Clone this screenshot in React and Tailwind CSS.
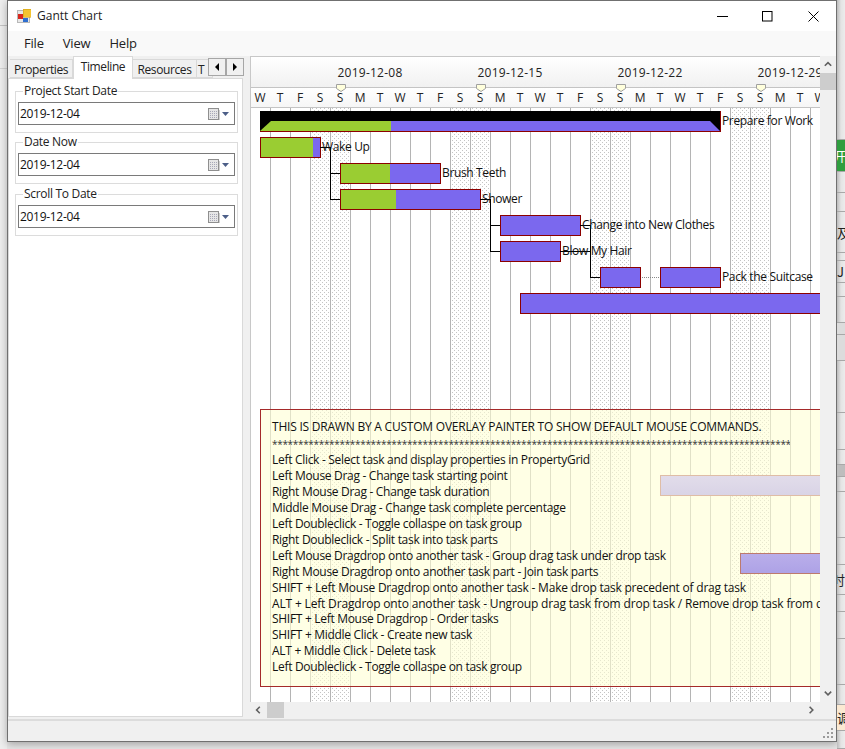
import React from "react";

const DAYS = "WTFSSMT".repeat(5).slice(0, 29).split("");

const LABELS = [
  { text: "Prepare for Work", cls: "left-[471px] top-[5px]" },
  { text: "Wake Up", cls: "left-[71px] top-[31px]" },
  { text: "Brush Teeth", cls: "left-[191px] top-[57px]" },
  { text: "Shower", cls: "left-[231px] top-[83px]" },
  { text: "Change into New Clothes", cls: "left-[331px] top-[109px]" },
  { text: "Blow My Hair", cls: "left-[311px] top-[135px]" },
  { text: "Pack the Suitcase", cls: "left-[471px] top-[161px]" },
];

const COMMANDS = [
  { text: "Left Click - Select task and display properties in PropertyGrid" },
  { text: "Left Mouse Drag - Change task starting point" },
  { text: "Right Mouse Drag - Change task duration" },
  { text: "Middle Mouse Drag - Change task complete percentage" },
  { text: "Left Doubleclick - Toggle collaspe on task group" },
  { text: "Right Doubleclick - Split task into task parts" },
  { text: "Left Mouse Dragdrop onto another task - Group drag task under drop task" },
  { text: "Right Mouse Dragdrop onto another task part - Join task parts" },
  { text: "SHIFT + Left Mouse Dragdrop onto another task - Make drop task precedent of drag task", cls: "tracking-[-0.22px]" },
  { text: "ALT + Left Dragdrop onto another task - Ungroup drag task from drop task / Remove drop task from drag task", cls: "tracking-[-0.17px] h-[15px]" },
  { text: "SHIFT + Left Mouse Dragdrop - Order tasks" },
  { text: "SHIFT + Middle Click - Create new task" },
  { text: "ALT + Middle Click - Delete task" },
  { text: "Left Doubleclick - Toggle collaspe on task group" },
];

// x, y, width, green width
const BARS = [
  [260, 137, 60, 53],
  [340, 163, 100, 50],
  [340, 189, 140, 56],
  [500, 215, 80, 0],
  [500, 241, 60, 0],
  [600, 267, 40, 0],
  [660, 267, 60, 0],
  [520, 293, 320, 0],
];

const LINES = [
  "M320 147.5H330.5V199.5H340M330.5 173.5H340",
  "M480 199.5H490.5V251.5H500M490.5 225.5H500",
  "M580 225.5H590.5V277.5H600M560 251.5H590.5",
];

function GanttDrawing() {
  const grid = [];
  for (let x = 270; x < 830; x += 20) grid.push(x);
  return (
    <svg className="absolute inset-0" width="569" height="594" viewBox="251 108 569 594" shapeRendering="crispEdges">
      <defs>
        <pattern id="weekend" width="4" height="4" patternUnits="userSpaceOnUse">
          <rect x="0" y="0" width="1" height="1" fill="#c4c4c4" />
          <rect x="2" y="2" width="1" height="1" fill="#c4c4c4" />
        </pattern>
      </defs>
      {[310, 450, 590, 730].map((x) => (
        <rect key={x} x={x} y="108" width="40" height="594" fill="url(#weekend)" />
      ))}
      {grid.map((x) => (
        <line key={x} x1={x + 0.5} x2={x + 0.5} y1="108" y2="702" stroke="#b4b4b4" />
      ))}

      <rect x="260" y="111" width="460" height="10" fill="#000" />
      <rect x="260" y="121" width="131" height="10" fill="#9acd32" />
      <rect x="391" y="121" width="329" height="10" fill="#7b68ee" />
      <g shapeRendering="auto">
        <polygon points="260,121 271,121 260,131" fill="#000" />
        <polygon points="710,121 720,121 720,131" fill="#000" />
      </g>
      <path d="M260 131.5H720.5V111" fill="none" stroke="#8b0000" />

      {BARS.map(([x, y, w, g]) => (
        <g key={x + "-" + y}>
          <rect x={x} y={y} width={w} height="20" fill="#7b68ee" />
          {g > 0 && <rect x={x} y={y} width={g} height="20" fill="#9acd32" />}
          <rect x={x + 0.5} y={y + 0.5} width={w} height="20" fill="none" stroke="#8b0000" />
        </g>
      ))}

      {LINES.map((d) => (
        <path key={d} d={d} fill="none" stroke="#000" />
      ))}
      <path d="M642 277.5H660" stroke="#888" strokeDasharray="1 1" />
    </svg>
  );
}

function Overlay() {
  return (
    <div className="absolute left-[9px] top-[301px] w-[640px] h-[278px] border border-[#a52a2a] bg-[#ffffd4]/60 pl-[11px] pt-[9px] text-[#111] whitespace-nowrap overflow-hidden">
      <div className="leading-[16px] tracking-[-0.22px]">THIS IS DRAWN BY A CUSTOM OVERLAY PAINTER TO SHOW DEFAULT MOUSE COMMANDS.</div>
      <div className="h-[16px] leading-[18px] text-[10px] tracking-[-0.32px] text-[#333] w-[518px] overflow-hidden">{"*".repeat(100)}</div>
      <div className="mt-[1px] flex flex-col">
        {COMMANDS.map((c) => (
          <div key={c.text + (c.cls || "")} className={"leading-[16px] " + (c.cls || "")}>{c.text}</div>
        ))}
      </div>
    </div>
  );
}

function ChartHeader() {
  return (
    <div className="relative h-[52px] shrink-0 border-t border-[#c8c8c8] overflow-hidden">
      <div className="h-[31px] flex pl-[49px] bg-gradient-to-b from-white to-[#f1f1f1] border-b border-[#c4c4c4]">
        {["2019-12-08", "2019-12-15", "2019-12-22", "2019-12-29"].map((d) => (
          <div key={d} className="w-[140px] shrink-0 text-center leading-[30px] pt-px tracking-[0.25px] text-[#222]">{d}</div>
        ))}
      </div>
      <div className="h-[20px] flex -ml-px bg-gradient-to-b from-white to-[#f6f6f6] border-b border-[#c4c4c4]">
        {DAYS.map((d, i) => (
          <div key={i} className="w-[20px] shrink-0 text-center leading-[19px] text-[#222]">{d}</div>
        ))}
      </div>
      {["left-[85px]", "left-[225px]", "left-[365px]", "left-[505px]"].map((l) => (
        <svg key={l} className={"absolute top-[27px] " + l} width="10" height="8" viewBox="0 0 10 8">
          <path d="M.5.5H9.5V4.5L5 7.5.5 4.5Z" fill="#ffffdc" stroke="#a0a0a0" />
        </svg>
      ))}
    </div>
  );
}

function Chevron({ dir }) {
  const d = { up: "M1 6L5 2 9 6", down: "M1 2L5 6 9 2", left: "M6 1L2 5 6 9", right: "M2 1L6 5 2 9" }[dir];
  return (
    <svg width="10" height="10" viewBox="0 0 10 10" className={dir === "left" || dir === "right" ? "w-[8px] h-[10px]" : "w-[10px] h-[8px]"} preserveAspectRatio="xMidYMid meet">
      <path d={d} fill="none" stroke="#606060" strokeWidth="2" />
    </svg>
  );
}

function DateField({ label, cls }) {
  return (
    <fieldset className={"border border-[#dcdcdc] mx-0 px-[2px] pb-[7px] pt-[3px] h-[50px] " + (cls || "")}>
      <legend className="ml-[5px] px-[1px] leading-[16px] text-[#222]">{label}</legend>
      <div className="h-[23px] border border-[#7a7a7a] bg-white flex items-center pl-[1px] pr-[5px]">
        <span className="flex-1 text-[#111]">2019-12-04</span>
        <svg width="21" height="12" viewBox="0 0 21 12" shapeRendering="crispEdges">
          <rect x=".5" y=".5" width="10" height="11" fill="#e6e6e6" stroke="#8f8f8f" />
          <path d="M2 3h7M2 5h7M2 7h7M2 9h7" stroke="#a8a8b8" strokeDasharray="1 1" />
          <path d="M11 2v10H2" fill="none" stroke="#cfcfcf" />
          <path d="M14 4h7l-3.5 4z" fill="#4c5f88" shapeRendering="auto" />
        </svg>
      </div>
    </fieldset>
  );
}

function Tab({ label, active, cls }) {
  return (
    <div
      className={
        "border border-[#d9d9d9] text-center overflow-hidden whitespace-nowrap " +
        (active ? "bg-white border-b-0 h-[23px] -mb-px relative z-10 leading-[20px] " : "bg-[#f0f0f0] border-l-0 h-[19px] leading-[20px] ") +
        cls
      }
    >
      {label}
    </div>
  );
}

function LeftPane() {
  return (
    <div className="w-[235px] shrink-0 flex flex-col">
      <div className="relative h-[22px] flex items-end pl-[2px] text-[#222] tracking-[-0.4px]">
        <Tab label="Properties" cls="w-[63px] border-l" />
        <Tab label="Timeline" active cls="w-[60px]" />
        <Tab label="Resources" cls="w-[64px]" />
        <Tab label="T" cls="w-[16px] text-left pl-[1px]" />
        <div className="absolute left-[200px] top-[2px] flex z-20">
          {["M5 3v8l-4-4z", "M1 3v8l4-4z"].map((d) => (
            <div key={d} className="w-[18px] h-[18px] border border-[#a6a6a6] bg-[#f0f0f0] flex items-center justify-center">
              <svg width="6" height="14" viewBox="0 0 6 14"><path d={d} fill="#000" /></svg>
            </div>
          ))}
        </div>
      </div>
      <div className="flex-1 mb-[2px] bg-white border border-[#d9d9d9] pl-[6px] pr-[4px] pt-[4px] flex flex-col gap-px">
        <DateField label="Project Start Date" />
        <DateField label="Date Now" />
        <DateField label="Scroll To Date" cls="mt-px" />
      </div>
    </div>
  );
}

function ChartPane() {
  return (
    <div className="w-[586px] flex flex-col">
      <div className="flex h-[646px]">
        <div className="w-[570px] flex flex-col border-l border-[#c8c8c8] bg-white">
          <ChartHeader />
          <div className="relative flex-1 overflow-hidden">
            <GanttDrawing />
            {LABELS.map((l) => (
              <div key={l.text} className={"absolute leading-[16px] tracking-[-0.35px] whitespace-nowrap text-[#111] " + l.cls}>{l.text}</div>
            ))}
            <Overlay />
            <div className="absolute left-[409px] top-[367px] w-[200px] h-[21px] border border-[#dfbda6] bg-gradient-to-b from-[#e2dcea] to-[#d9d4e6]" />
            <div className="absolute left-[489px] top-[445px] w-[200px] h-[21px] border border-[#bd7a6e] bg-gradient-to-b from-[#b9aeea] to-[#aea2e6]" />
          </div>
        </div>
        <div className="w-[16px] flex flex-col items-center">
          <div className="h-[17px] flex items-center justify-center"><Chevron dir="up" /></div>
          <div className="w-full h-[17px] bg-[#cdcdcd]" />
          <div className="flex-1" />
          <div className="h-[17px] flex items-center justify-center"><Chevron dir="down" /></div>
        </div>
      </div>
      <div className="h-[16px] flex items-center">
        <div className="w-[17px] flex justify-center"><Chevron dir="left" /></div>
        <div className="w-[17px] h-full bg-[#cdcdcd]" />
        <div className="flex-1" />
        <div className="w-[32px] flex justify-center pr-[16px]"><Chevron dir="right" /></div>
      </div>
    </div>
  );
}

function TitleBar() {
  return (
    <div className="h-[30px] shrink-0 bg-white flex items-center text-[#222]">
      <svg className="ml-[9px] mr-[6px]" width="14" height="14" viewBox="0 0 14 14" shapeRendering="crispEdges">
        <rect x="0" y="1" width="13" height="13" fill="#b8b8b8" />
        <rect x="1" y="2" width="11" height="11" fill="#e8e8e8" />
        <rect x="6" y="0" width="8" height="8" fill="#f4c430" stroke="#c89a10" strokeWidth=".5" />
        <rect x="1" y="5" width="5" height="5" fill="#d8281e" />
        <rect x="6" y="9" width="5" height="4" fill="#2f6fd0" />
      </svg>
      <span className="tracking-normal">Gantt Chart</span>
      <div className="ml-auto flex items-center">
        <svg width="11" height="11" viewBox="0 0 11 11" className="mr-[34px]"><path d="M0 5.5H11" stroke="#000" /></svg>
        <svg width="11" height="11" viewBox="0 0 11 11" className="mr-[35px]"><rect x=".5" y=".5" width="9.5" height="9.5" fill="none" stroke="#000" /></svg>
        <svg width="11" height="11" viewBox="0 0 11 11" className="mr-[17px]"><path d="M.5.5L10.5 10.5M10.5.5L.5 10.5" stroke="#000" /></svg>
      </div>
    </div>
  );
}

function Grip() {
  const dots = ["8,0", "4,4", "8,4", "0,8", "4,8", "8,8"];
  return (
    <svg width="11" height="11" viewBox="0 0 11 11" shapeRendering="crispEdges">
      {dots.map((p) => {
        const [x, y] = p.split(",");
        return <rect key={p} x={x} y={y} width="2" height="2" fill="#9a9a9a" />;
      })}
    </svg>
  );
}

// desktop stuff peeking out beside the window
const RIGHT_ROWS = [
  { h: "h-[140px]" },
  { h: "h-[32px]", bg: "bg-[#2f9e3f]", text: "开", color: "text-white", shift: "-ml-[4px]" },
  { h: "h-[21px]" },
  { h: "h-[19px]" },
  { h: "h-[41px]", text: "及" },
  { h: "h-[8px]" },
  { h: "h-[22px]", text: "J" },
  { h: "h-[14px]" },
  { h: "h-[26px]" },
  { h: "h-[12px]", bg: "bg-[#dcdcdc]" },
  { h: "h-[26px]", bg: "bg-[#dcdcdc]" },
  { h: "h-[52px]" },
  { h: "h-[37px]" },
  { h: "h-[15px]" },
  { h: "h-[12px]", bg: "bg-[#bdbdbd]" },
  { h: "h-[15px]" },
  { h: "h-[46px]" },
  { h: "h-[27px]" },
  { h: "h-[30px]", text: "时", shift: "-ml-[5px]" },
  { h: "h-[17px]" },
  { h: "h-[27px]" },
  { h: "h-[46px]" },
  { h: "h-[20px]" },
  { h: "h-[26px]", bg: "bg-[#fbe9d2]", text: "调" },
  { h: "h-[18px]" },
];

function RightStrip() {
  return (
    <div className="w-[8px] shrink-0 overflow-hidden flex flex-col bg-gradient-to-r from-[#bcbcbc] via-[#e4e4e4] to-[#ececec]">
      {RIGHT_ROWS.map((r, i) => (
        <div key={i} className={"shrink-0 border-b border-[#a8a8a8] overflow-hidden flex items-center leading-none whitespace-nowrap " + r.h + " " + (r.bg || "") + " " + (r.color || "text-[#222]")}>
          {r.text && <span className={"shrink-0 text-[13px] font-['Noto_Sans_CJK_SC',sans-serif] " + (r.shift || "")}>{r.text}</span>}
        </div>
      ))}
    </div>
  );
}

export default function App() {
  return (
    <div className="w-[845px] h-[749px] flex overflow-hidden bg-[#e6e6e6] text-[12px] font-['Open_Sans',sans-serif] tracking-[-0.3px]">
      <div className="w-[7px] shrink-0 flex flex-col bg-[#eeeeee]">
        <div className="h-[26px] border-b border-[#c4c4c4]" />
        <div className="h-[43px] border-b border-[#d4d4d4]" />
      </div>
      <div className="w-[830px] shrink-0 flex flex-col">
        <div className="h-[742px] shrink-0 border border-[#707070] bg-[#f0f0f0] flex flex-col shadow-[0_2px_8px_rgba(0,0,0,0.3)]">
          <TitleBar />
          <div className="h-[25px] shrink-0 bg-[#f9f9f9] flex items-center pl-[16px] gap-[19px] text-[13px] tracking-[-0.2px] text-[#222]">
            <span>File</span>
            <span>View</span>
            <span>Help</span>
          </div>
          <div className="h-[663px] shrink-0 flex">
            <LeftPane />
            <div className="w-[7px] shrink-0" />
            <ChartPane />
          </div>
          <div className="flex-1 border-t-2 border-[#dcdcdc] flex items-end justify-end pr-[2px] pb-[2px]">
            <Grip />
          </div>
        </div>
      </div>
      <RightStrip />
    </div>
  );
}
